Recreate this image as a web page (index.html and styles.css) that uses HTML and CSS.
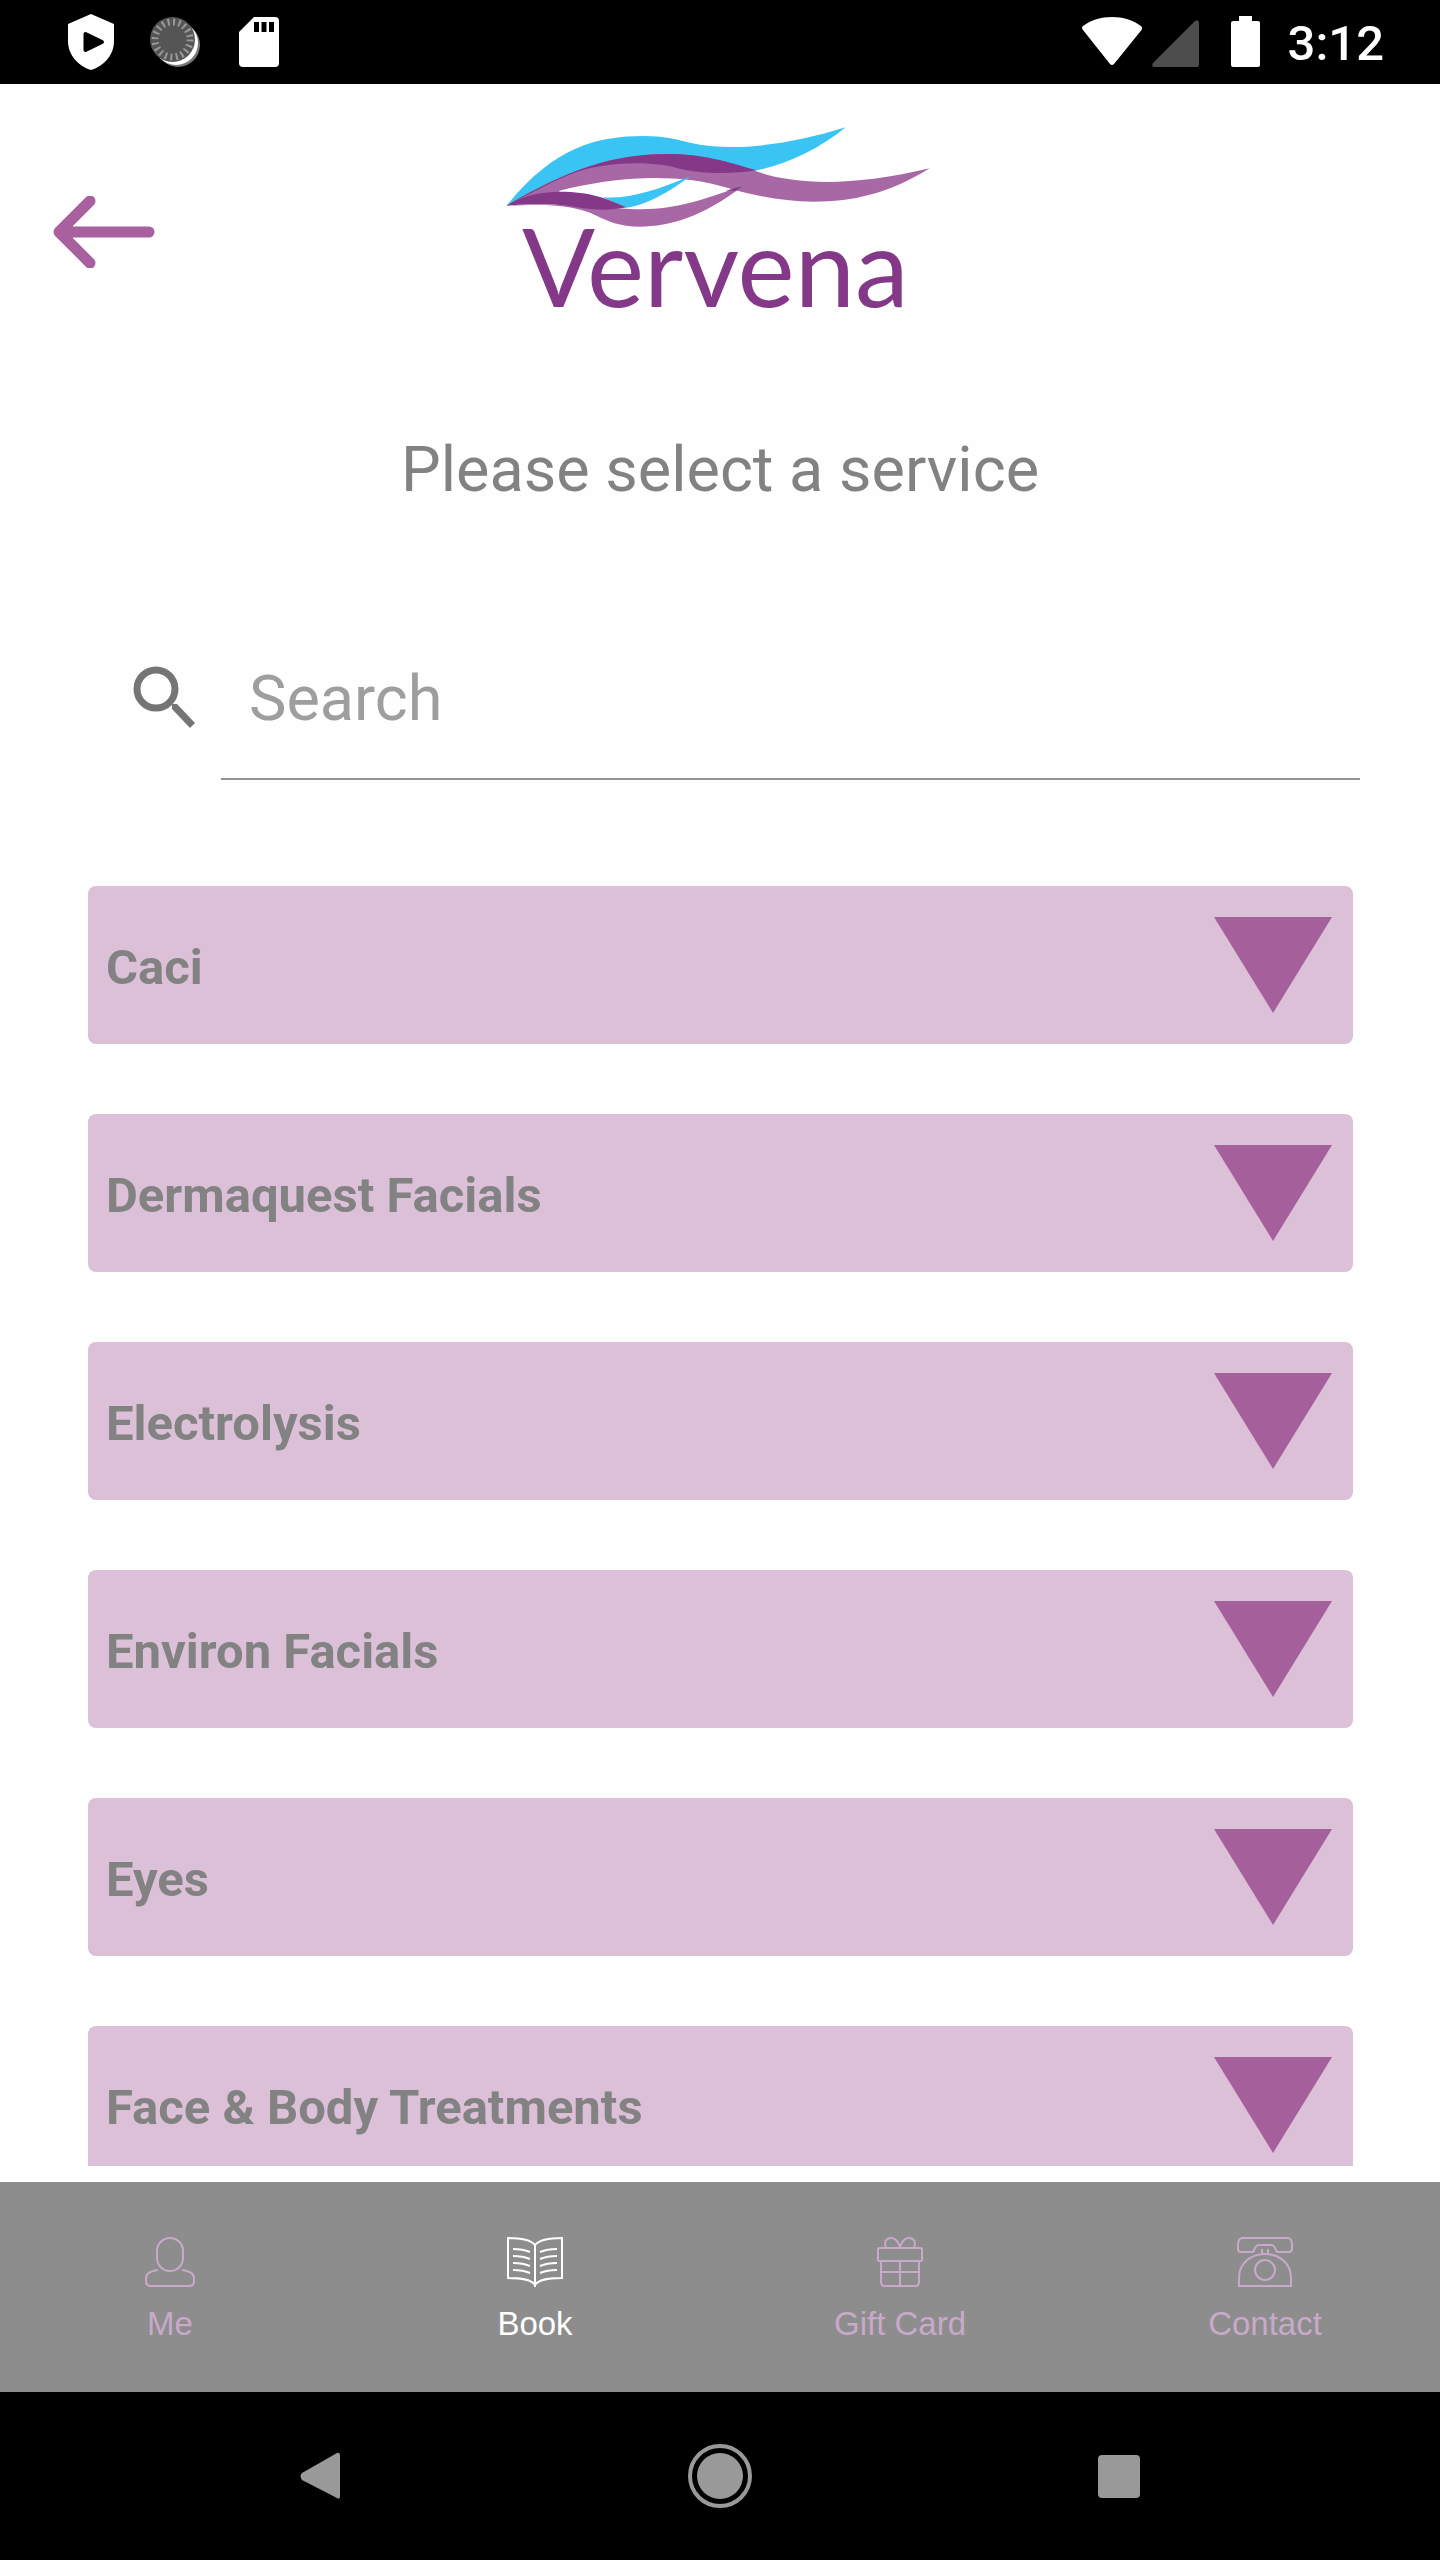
FILE: index.html
```
<!DOCTYPE html>
<html lang="en">

<head>
    <meta charset="UTF-8">
    <meta name="viewport" content="width=device-width, initial-scale=1.0">
    <title>Vervena - Book</title>
    <link rel="stylesheet" href="styles.css">
</head>

<body>

    <div class="status_bar">
        <div class="status_group">
            <svg width="50" height="58" viewBox="0 0 50 58">
                <path fill="#fff" d="M25 1 L48 11 V28 C48 42 38 53 25 57 C12 53 2 42 2 28 V11 Z" />
                <path fill="#000" stroke="#000" stroke-width="4" stroke-linejoin="round" d="M19.500 21 V37 L36 29 Z" />
            </svg>
            <svg width="50" height="58" viewBox="0 0 50 58">
                <circle cx="28" cy="32" r="22" fill="#777" />
                <circle cx="26" cy="30" r="22" fill="#fff" />
                <circle cx="22.500" cy="26.500" r="22.500" fill="#555" />
                <circle cx="22.500" cy="26.500" r="17.500" fill="none" stroke="#999" stroke-width="7" stroke-dasharray="2 3.500" />
            </svg>
            <svg width="50" height="58" viewBox="0 0 50 58">
                <path fill="#fff" d="M20 4 H41 Q45 4 45 8 V50 Q45 54 41 54 H9 Q5 54 5 50 V19 Z" />
                <path fill="#000" d="M20 9h5v10h-5zM27.500 9h5v10h-5zM35 9h5v10h-5z" />
            </svg>
        </div>
        <div class="status_group status_right">
            <svg width="120" height="58" viewBox="0 0 120 58">
                <path fill="#fff" d="M30 4 C41 4 51 7 59 13 Q61 15 59.500 17 L32 51 Q30 53 28 51 L1 17 Q-1 15 1 13 C9 7 19 4 30 4 Z" />
                <path fill="#4d4d4d" d="M113 8 Q117 6 117 10 V52 Q117 54 115 54 H72 Q69 53 71 50 Z" />
            </svg>
            <svg width="30" height="58" viewBox="0 0 30 58">
                <path fill="#fff" d="M9 3 H22 V8 H28 Q30 8 30 10 V52 Q30 54 28 54 H3 Q1 54 1 52 V10 Q1 8 3 8 H9 Z" />
            </svg>
            <span class="clock">3:12</span>
        </div>
    </div>

    <header class="header">
        <button type="button" class="back_btn" aria-label="Back">
            <svg width="102" height="72" viewBox="0 0 102 72">
                <path fill="none" stroke="#a8609e" stroke-width="11" stroke-linecap="round" stroke-linejoin="round" d="M37 5 L6 36 L37 67 M6 36 H96" />
                <path fill="#a8609e" d="M5 36 L16 26 H20 V46 H16 Z" />
            </svg>
        </button>
        <svg class="logo" viewBox="0 36 1380 660" role="img" aria-label="Vervena">
            <path fill="#39c4f3" d="M50 287 C190 112 320 78 460 78 C520 78 560 88 600 98 C720 125 880 110 1067 52 C990 115 900 160 800 181 L700 190 L480 166 Z" />
            <path fill="#a768a5" d="M50 287 C230 180 370 132 530 132 C640 132 710 155 790 181 C900 222 1070 235 1319 175 C1200 250 1090 275 970 275 C880 275 800 258 725 237 C640 210 560 203 480 204 C380 206 290 222 205 242 L210 246 Z" />
            <path fill="#833988" d="M50 287 C230 180 370 132 530 132 C640 132 710 155 800 181 C720 194 630 192 560 174 C480 152 350 156 260 186 C180 215 110 258 50 287 Z" />
            <path fill="#39c4f3" d="M338 262 C420 268 500 240 602 198 C530 250 470 285 410 293 Z" />
            <path fill="#a768a5" d="M50 287 C110 282 180 280 260 290 L410 296 C540 305 620 275 757 229 C640 320 540 350 450 350 C390 350 350 332 320 317 C250 283 170 282 50 287 Z" />
            <path fill="#833988" d="M50 287 C100 255 160 245 210 245 C300 245 350 265 410 292 C360 303 310 300 260 292 C180 278 110 282 50 287 Z" />
            <path fill="#833988" d="M706 242 L757 229 L738 242 Z" />
            <text class="logo_text" x="676" y="590" text-anchor="middle">Vervena</text>
        </svg>
    </header>

    <h1 class="title">Please select a service</h1>

    <div class="search">
        <label for="search">
            <svg width="62" height="62" viewBox="0 0 62 62" role="img" aria-label="Search">
                <circle cx="23" cy="23" r="19" fill="none" stroke="#757575" stroke-width="7" />
                <path fill="#757575" d="M39 38 L44 38 L62 57 L57 62 L39 43 Z" />
            </svg>
        </label>
        <input type="text" id="search" name="search" placeholder="Search" />
    </div>

    <main class="list">
        <button type="button" class="item"><span>Caci</span><i class="arrow"></i></button>
        <button type="button" class="item"><span>Dermaquest Facials</span><i class="arrow"></i></button>
        <button type="button" class="item"><span>Electrolysis</span><i class="arrow"></i></button>
        <button type="button" class="item"><span>Environ Facials</span><i class="arrow"></i></button>
        <button type="button" class="item"><span>Eyes</span><i class="arrow"></i></button>
        <button type="button" class="item"><span>Face &amp; Body Treatments</span><i class="arrow"></i></button>
    </main>

    <nav class="tabs">
        <a href="#me" class="tab">
            <svg width="60" height="52" viewBox="0 0 60 52">
                <rect x="17" y="2" width="26" height="33" rx="13" />
                <path d="M18 34 C10 35 6 38 6 42 V45 Q6 50 11 50 H49 Q54 50 54 45 V42 C54 38 50 35 42 34" />
            </svg>
            <span>Me</span>
        </a>
        <a href="#book" class="tab active">
            <svg width="60" height="52" viewBox="0 0 60 52">
                <path d="M30 9 C25 3 15 2 3 2 V42 C16 42 26 43 30 49 C34 43 44 42 57 42 V2 C45 2 35 3 30 9 V51" />
                <path d="M8 13 Q18 13 25 16 M8 20 Q18 20 25 23 M8 27 Q18 27 25 30 M8 34 Q18 34 25 37 M52 13 Q42 13 35 16 M52 20 Q42 20 35 23 M52 27 Q42 27 35 30 M52 34 Q42 34 35 37" />
            </svg>
            <span>Book</span>
        </a>
        <a href="#gift" class="tab">
            <svg width="60" height="52" viewBox="0 0 60 52">
                <rect x="8" y="12" width="44" height="13" rx="1" />
                <path d="M11 25 V46 Q11 50 15 50 H45 Q49 50 49 46 V25 M30 25 V50 M11 36 H49" />
                <path d="M16 12 C13 4 18 2 21 2 C26 2 28 6 30 11 C32 6 34 2 39 2 C42 2 47 4 44 12" />
            </svg>
            <span>Gift Card</span>
        </a>
        <a href="#contact" class="tab">
            <svg width="60" height="52" viewBox="0 0 60 52">
                <path d="M7 2 H53 Q57 3 57 8 V13 Q57 16 54 16 H43 Q41 16 41 14 Q39 9 36 9 H24 Q21 9 19 14 Q19 16 17 16 H6 Q3 16 3 13 V8 Q3 3 7 2 Z" />
                <path d="M4 50 V42 C4 27 16 18 30 18 C44 18 56 27 56 42 V50 Z M27 13 V18 M33 13 V18" />
                <circle cx="30" cy="34" r="10" />
            </svg>
            <span>Contact</span>
        </a>
    </nav>

    <div class="system_nav">
        <button type="button" aria-label="System back">
            <svg width="64" height="64" viewBox="0 0 64 64"><path fill="#999" d="M49 9 Q52 8 52 12 V52 Q52 56 49 54 L14 36 Q11 32 14 29 Z" /></svg>
        </button>
        <button type="button" aria-label="Home">
            <svg width="64" height="64" viewBox="0 0 64 64"><circle cx="32" cy="32" r="30" fill="none" stroke="#999" stroke-width="4" /><circle cx="32" cy="32" r="23" fill="#999" /></svg>
        </button>
        <button type="button" aria-label="Recent apps">
            <svg width="64" height="64" viewBox="0 0 64 64"><rect x="10" y="11" width="42" height="43" rx="4" fill="#999" /></svg>
        </button>
    </div>

</body>

</html>
```
FILE: styles.css
```
* {
    margin: 0;
    padding: 0;
    box-sizing: border-box;
}

body {
    display: flex;
    flex-direction: column;
    height: 100vh;
    background-color: #fefefe;
    color: #828282;
    font-family: Roboto, sans-serif;
}

svg {
    display: block;
    flex: none;
}

button {
    border: none;
    background: none;
    font-family: inherit;
    color: inherit;
    cursor: pointer;
}

.status_bar {
    display: flex;
    justify-content: space-between;
    align-items: center;
    flex: none;
    height: 84px;
    padding: 0 56px 0 66px;
    background-color: #000;
    color: #fff;
}

.status_group {
    display: flex;
    align-items: center;
    gap: 34px;
}

.status_right {
    gap: 28px;
}

.clock {
    padding-top: 4px;
    font-size: 49px;
    font-weight: 500;
    line-height: 56px;
}

.header {
    display: grid;
    grid-template-columns: 1fr auto 1fr;
    align-items: center;
    flex: none;
    padding: 38px 53px 0;
}

.back_btn {
    justify-self: start;
}

.logo {
    width: 460px;
    height: 220px;
}

.logo_text {
    font-family: Lato, sans-serif;
    font-size: 324px;
    fill: #833988;
}

.title {
    flex: none;
    margin-top: 90px;
    font-size: 63px;
    line-height: 76px;
    font-weight: 400;
    text-align: center;
}

.search {
    display: flex;
    align-items: center;
    flex: none;
    gap: 26px;
    margin: 110px 80px 0 133px;
}

.search label {
    padding-bottom: 4px;
}

.search input {
    flex: 1;
    min-width: 0;
    height: 162px;
    padding: 0 28px;
    border: none;
    border-bottom: 2px solid #959595;
    outline: none;
    background: none;
    font-family: inherit;
    font-size: 63px;
    color: #828282;
}

.search input::placeholder {
    color: #9e9e9e;
    opacity: 1;
}

.list {
    display: flex;
    flex-direction: column;
    flex: 1;
    gap: 70px;
    min-height: 0;
    margin: 106px 87px 16px 88px;
    overflow-y: auto;
    scrollbar-width: none;
}

.item {
    display: flex;
    justify-content: space-between;
    align-items: center;
    flex: none;
    height: 158px;
    padding: 0 21px 0 18px;
    border-radius: 8px;
    background-color: #dbc0d8;
    font-size: 49px;
    font-weight: 700;
    line-height: 56px;
    text-align: left;
}

.item span {
    padding-top: 5px;
}

.arrow {
    width: 118px;
    height: 96px;
    background-color: #a55f9b;
    clip-path: polygon(0 0, 100% 0, 50% 100%);
}

.tabs {
    display: flex;
    justify-content: space-between;
    flex: none;
    height: 210px;
    padding: 54px 75px 0 70px;
    background-color: #8d8d8d;
}

.tab {
    display: flex;
    flex-direction: column;
    align-items: center;
    gap: 17px;
    width: 200px;
    color: #c9a9c9;
    font-family: "Liberation Sans", sans-serif;
    font-size: 33px;
    line-height: 38px;
    text-decoration: none;
}

.tab svg {
    fill: none;
    stroke: currentColor;
    stroke-width: 2;
}

.tab.active {
    color: #fff;
}

.system_nav {
    display: flex;
    justify-content: space-between;
    align-items: center;
    flex: none;
    height: 168px;
    padding: 0 20%;
    background-color: #000;
}
```
